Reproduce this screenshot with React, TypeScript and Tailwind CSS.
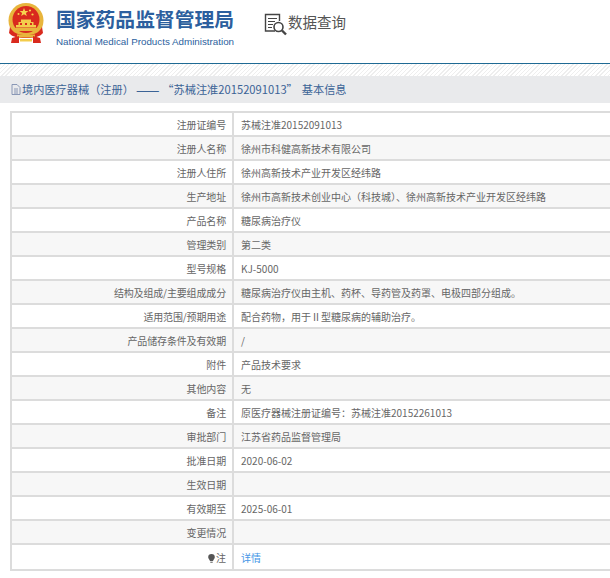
const rows: [string, string][] = [
  ["注册证编号", "苏械注准20152091013"],
  ["注册人名称", "徐州市科健高新技术有限公司"],
  ["注册人住所", "徐州高新技术产业开发区经纬路"],
  ["生产地址", "徐州市高新技术创业中心（科技城）、徐州高新技术产业开发区经纬路"],
  ["产品名称", "糖尿病治疗仪"],
  ["管理类别", "第二类"],
  ["型号规格", "KJ-5000"],
  ["结构及组成/主要组成成分", "糖尿病治疗仪由主机、药杯、导药管及药罩、电极四部分组成。"],
  ["适用范围/预期用途", "配合药物，用于Ⅱ型糖尿病的辅助治疗。"],
  ["产品储存条件及有效期", "/"],
  ["附件", "产品技术要求"],
  ["其他内容", "无"],
  ["备注", "原医疗器械注册证编号：苏械注准20152261013"],
  ["审批部门", "江苏省药品监督管理局"],
  ["批准日期", "2020-06-02"],
  ["生效日期", ""],
  ["有效期至", "2025-06-01"],
  ["变更情况", ""],
];

function Emblem() {
  return (
    <svg width="36" height="40" viewBox="0 0 36 40" className="shrink-0">
      <circle cx="18" cy="17.5" r="17.5" fill="#e8b53c" />
      <circle cx="18" cy="16.5" r="13.5" fill="#d92a1e" />
      <polygon points="16,5 17.2,8 20.4,8 17.9,10 18.8,13 16,11.2 13.2,13 14.1,10 11.6,8 14.8,8" fill="#f6d44e" />
      <circle cx="10.5" cy="11" r="1" fill="#f6d44e" />
      <circle cx="22" cy="7.5" r="1.1" fill="#f6d44e" />
      <circle cx="24.5" cy="11.5" r="1.1" fill="#f6d44e" />
      <path d="M13 16.5h10V19H13zM10.5 19h15v3h-15zM8 22h20v2.5H8z" fill="#f3cc4c" />
      <path d="M12 20h2v2h-2zM17 20h2v2h-2zM22 20h2v2h-2z" fill="#d92a1e" />
      <path d="M5 25h26v3H5z" fill="#e8b53c" />
      <path d="M2 24c3 6 8 8 16 8s13-2 16-8l1 6c-3 4-9 5-17 5S4 34 1 30z" fill="#d92a1e" />
      <path d="M9 31.5h18v3H9z" fill="#e8b53c" />
      <path d="M4 35l7-2v7H3zM32 35l-7-2v7h8z" fill="#d92a1e" />
      <path d="M12 36h12v2.500H12z" fill="#f3cc4c" />
    </svg>
  );
}

function SearchDoc() {
  return (
    <svg width="24" height="24" viewBox="0 0 24 24" fill="none" stroke="#444" className="shrink-0">
      <path d="M11 18H1.500V1.500h14V8" strokeWidth="1.400" />
      <path d="M4 5.500h9M4 8.500h7M4 11.500h5M4 14.500h4" strokeWidth="1.200" />
      <circle cx="14.500" cy="14" r="4.500" strokeWidth="1.600" />
      <path d="M18 17.500l4 4" strokeWidth="2.400" />
    </svg>
  );
}

export default function App() {
  return (
    <div className="w-[610px] h-[578px] overflow-hidden bg-white font-['Noto_Sans_CJK_SC','Liberation_Sans',sans-serif]">
      <header className="h-[63px] flex items-start pl-2 pt-[3px]">
        <Emblem />
        <div className="ml-3 mt-[4px] w-[180px]">
          <div className="text-[19.800px] leading-[24px] font-bold text-[#2c5f9e] whitespace-nowrap">国家药品监督管理局</div>
          <div className="text-[9.800px] leading-[14px] mt-[4px] text-[#2c5f9e] font-['Liberation_Sans',sans-serif] whitespace-nowrap">National Medical Products Administration</div>
        </div>
        <div className="ml-[28px] mt-[10px] flex items-center">
          <SearchDoc />
          <span className="text-[14.500px] text-[#555] leading-[20px] -mt-[6px]">数据查询</span>
        </div>
      </header>
      <div className="h-[13px] border-t border-[#1f6a94] bg-[repeating-linear-gradient(135deg,#eeeeee_0px,#eeeeee_1px,#ffffff_1px,#ffffff_3px)]" />
      <div className="h-[27px] bg-[#e9eaec] flex items-center pl-[11px] text-[11.200px] text-[#3b6396] whitespace-pre">
        <svg width="10" height="11" viewBox="0 0 10 11" fill="none" stroke="#7f8fb0" className="mr-[1px]">
          <path d="M1 .5h5l3 3v7H1zM3 5h4M3 7h4M3 9h4" strokeWidth="0.900" />
        </svg>
        <span>境内医疗器械（注册）</span>
        <span className="ml-[2px] text-[14px]">——</span>
        <span className="ml-[3px]">“苏械注准20152091013”</span>
        <span className="ml-[4px]">基本信息</span>
      </div>
      <table className="mt-[8px] ml-[10px] w-[610px] border-collapse text-[10px] text-[#666] table-fixed">
        <tbody>
          {rows.map(([k, v], i) => (
            <tr key={k} className={i % 2 === 1 ? "h-[24px] bg-[#f7f7f7]" : "h-[24px] bg-white"}>
              <td className="w-[222px] border-2 border-[#dcdcdc] text-right pr-[6px] p-0 tracking-[-0.15px]">{k}</td>
              <td className="border-2 border-[#dcdcdc] pl-[7px] p-0 whitespace-nowrap">{v}</td>
            </tr>
          ))}
          <tr className="h-[26px]">
            <td className="border-2 border-[#dcdcdc] text-right pr-[6px] p-0">
              <span className="inline-flex items-center mr-[1px] align-middle">
                <svg width="7" height="9" viewBox="0 0 7 9">
                  <path d="M3.500 0a3.300 3.300 0 0 1 3.300 3.300c0 1.500-1.300 2.200-1.800 3.700H2c-.5-1.500-1.800-2.200-1.800-3.700A3.300 3.300 0 0 1 3.500 0z" fill="#555" />
                  <path d="M2.300 7.600h2.400V9H2.300z" fill="#888" />
                </svg>
              </span>注
            </td>
            <td className="border-2 border-[#dcdcdc] pl-[7px] p-0 text-[#4596e6]">详情</td>
          </tr>
        </tbody>
      </table>
    </div>
  );
}
